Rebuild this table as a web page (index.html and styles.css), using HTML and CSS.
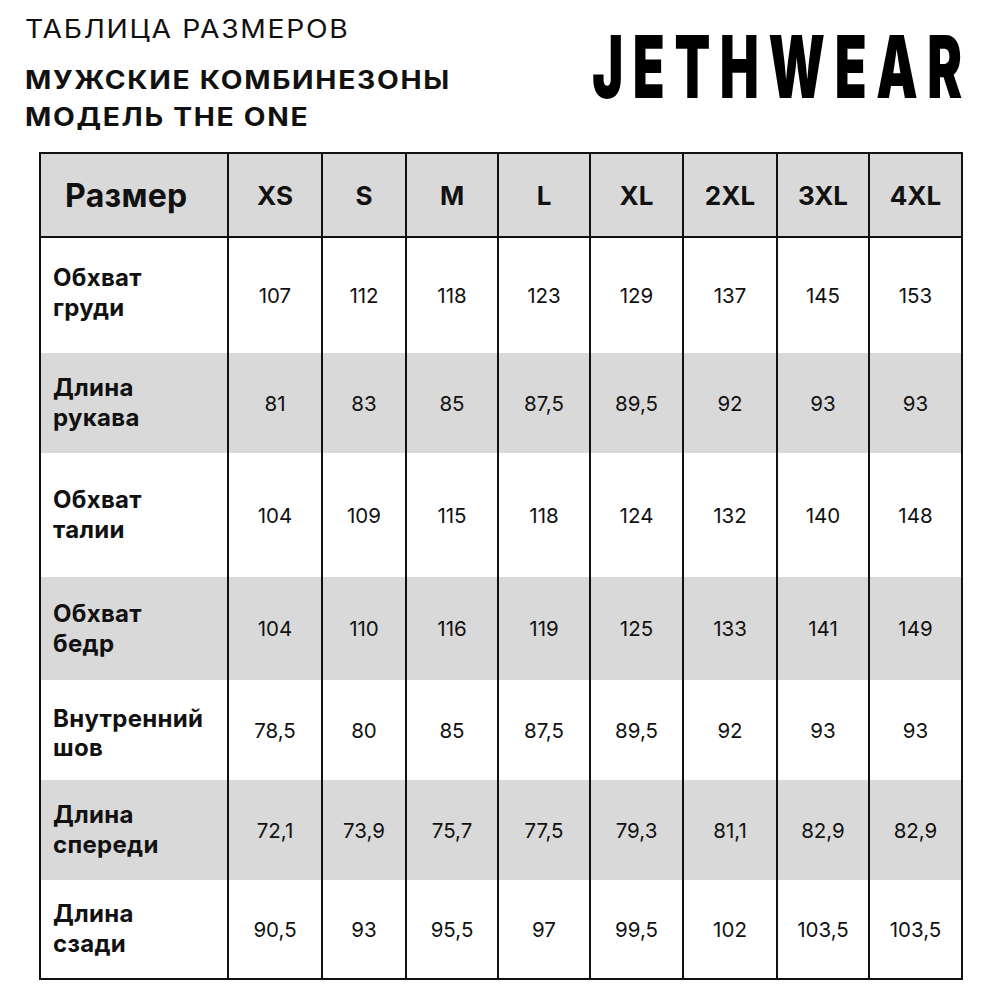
FILE: index.html
```html
<!DOCTYPE html>
<html lang="ru">
<head>
<meta charset="utf-8">
<title>Таблица размеров</title>
<link rel="stylesheet" href="styles.css">
</head>
<body>
<div class="page">
  <header class="top">
    <div class="titles">
      <div class="t1"><span class="wide">ТАБЛИЦА РАЗМЕРОВ</span></div>
      <div class="t2"><span class="wide">МУЖСКИЕ КОМБИНЕЗОНЫ</span></div>
      <div class="t2"><span class="wide">МОДЕЛЬ THE ONE</span></div>
    </div>
    <div class="logo"><span class="logo-text">JETHWEAR</span></div>
  </header>
  <table class="sizes">
    <colgroup>
      <col class="c-label">
      <col class="c94"><col class="c84"><col class="c92"><col class="c92">
      <col class="c93"><col class="c94"><col class="c92"><col class="c93">
    </colgroup>
    <thead>
      <tr class="h">
        <th class="lab">Размер</th>
        <th>XS</th><th>S</th><th>M</th><th>L</th><th>XL</th><th>2XL</th><th>3XL</th><th>4XL</th>
      </tr>
    </thead>
    <tbody>
      <tr class="r1"><td class="lab up">Обхват<br>груди</td><td>107</td><td>112</td><td>118</td><td>123</td><td>129</td><td>137</td><td>145</td><td>153</td></tr>
      <tr class="r2 g"><td class="lab">Длина<br>рукава</td><td>81</td><td>83</td><td>85</td><td>87,5</td><td>89,5</td><td>92</td><td>93</td><td>93</td></tr>
      <tr class="r3"><td class="lab">Обхват<br>талии</td><td>104</td><td>109</td><td>115</td><td>118</td><td>124</td><td>132</td><td>140</td><td>148</td></tr>
      <tr class="r4 g"><td class="lab">Обхват<br>бедр</td><td>104</td><td>110</td><td>116</td><td>119</td><td>125</td><td>133</td><td>141</td><td>149</td></tr>
      <tr class="r5"><td class="lab tight">Внутренний<br>шов</td><td>78,5</td><td>80</td><td>85</td><td>87,5</td><td>89,5</td><td>92</td><td>93</td><td>93</td></tr>
      <tr class="r6 g"><td class="lab">Длина<br>спереди</td><td>72,1</td><td>73,9</td><td>75,7</td><td>77,5</td><td>79,3</td><td>81,1</td><td>82,9</td><td>82,9</td></tr>
      <tr class="r7"><td class="lab">Длина<br>сзади</td><td>90,5</td><td>93</td><td>95,5</td><td>97</td><td>99,5</td><td>102</td><td>103,5</td><td>103,5</td></tr>
    </tbody>
  </table>
</div>
</body>
</html>
```

FILE: styles.css
```css
html, body {
  margin: 0;
  padding: 0;
  background: #ffffff;
}
body {
  font-family: Inter, "Noto Sans", sans-serif;
  color: #111111;
}
.page {
  width: 1000px;
  padding: 0 0 0 25px;
  box-sizing: border-box;
}
.top {
  height: 152px;
  display: flex;
  justify-content: space-between;
  align-items: flex-start;
}
.titles {
  padding-top: 13px;
  white-space: nowrap;
}
.wide {
  display: inline-block;
  letter-spacing: 1.5px;
  transform: scaleX(1.13);
  transform-origin: left center;
}
.t1 {
  font-size: 25px;
  font-weight: 400;
  line-height: 32px;
  margin-bottom: 17px;
}
.t2 {
  font-size: 25px;
  font-weight: 700;
  line-height: 37px;
}
.logo {
  width: 400px;
  padding-top: 23px;
  padding-right: 28px;
  display: flex;
  justify-content: flex-end;
}
.logo-text {
  display: inline-block;
  font-size: 87px;
  font-weight: 900;
  line-height: 1;
  letter-spacing: 16px;
  transform: scaleX(0.6);
  transform-origin: right center;
  color: #000;
}
.sizes {
  margin-left: 14px;
  border-collapse: collapse;
  table-layout: fixed;
  width: 922px;
  border: 2px solid #111;
}
.c-label { width: 188px; }
.c94 { width: 94px; }
.c84 { width: 84px; }
.c92 { width: 92px; }
.c93 { width: 93px; }
.sizes th,
.sizes td {
  padding: 0;
  border-left: 2px solid #111;
  border-right: 2px solid #111;
  text-align: center;
  vertical-align: middle;
}
.sizes thead tr {
  background: #d9d9d9;
  height: 84px;
}
.sizes thead th {
  border-bottom: 2px solid #111;
  font-size: 26px;
  font-weight: 700;
}
.sizes th.lab {
  text-align: left;
  padding-left: 24px;
  font-size: 32px;
  letter-spacing: 0.3px;
}
.sizes td {
  font-size: 20.5px;
  font-weight: 400;
}
.sizes td.lab {
  text-align: left;
  padding-left: 12px;
  font-size: 24px;
  font-weight: 700;
  line-height: 30px;
  letter-spacing: 0.3px;
}
.sizes td.lab.up {
  padding-bottom: 6px;
}
.sizes td.lab.tight {
  line-height: 29.5px;
  padding-top: 6px;
}
.sizes tr.g { background: #d9d9d9; }
.r1 { height: 116px; }
.r2 { height: 100px; }
.r3 { height: 124px; }
.r4 { height: 103px; }
.r5 { height: 100px; }
.r6 { height: 100px; }
.r7 { height: 99px; }
```
